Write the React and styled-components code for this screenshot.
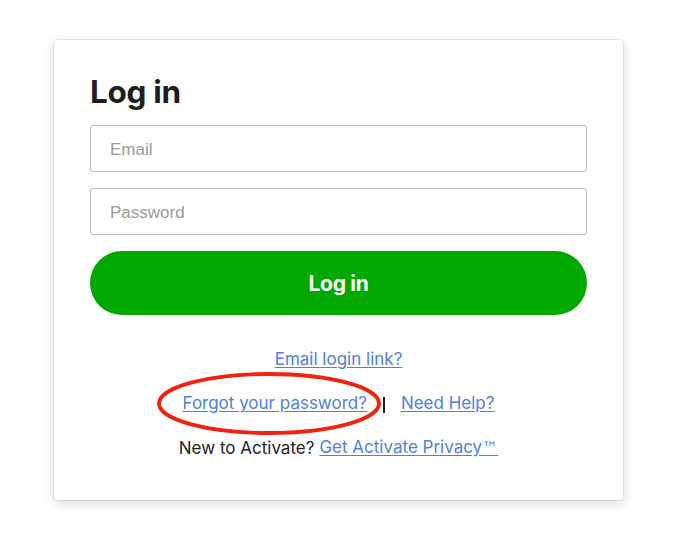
import React from "react";
import styled, { createGlobalStyle } from "styled-components";

const GlobalStyle = createGlobalStyle`
  html, body { margin: 0; padding: 0; background: #ffffff; }
  body { font-family: Inter, "Liberation Sans", Arial, sans-serif; color: #222; }
  * { box-sizing: border-box; }
`;

const Page = styled.div`
  padding: 40px 0 0 54px;
  width: 697px;
  height: 557px;
`;

const Card = styled.div`
  width: 569px;
  height: 460px;
  background: #fff;
  border-radius: 4px;
  box-shadow: 0 0 0 1px rgba(0, 0, 0, 0.07), 0 3px 12px rgba(0, 0, 0, 0.16);
  padding: 34px 36px 0 36px;
  display: flex;
  flex-direction: column;
`;

const Title = styled.h1`
  margin: 0;
  font-family: Inter, "Liberation Sans", sans-serif;
  font-weight: 700;
  font-size: 31.5px;
  line-height: 36px;
  letter-spacing: -0.3px;
  color: #1e1e1e;
`;

const Form = styled.form`
  margin-top: 15px;
  display: flex;
  flex-direction: column;
  gap: 16px;
`;

const Field = styled.input`
  width: 100%;
  height: 47px;
  border: 1px solid #b9b9b9;
  border-radius: 3px;
  padding: 2px 19px 0;
  font-family: "Liberation Sans", Arial, sans-serif;
  font-size: 17px;
  color: #222;
  outline: none;
  &::placeholder { color: #9a9a9a; }
`;

const Submit = styled.button`
  height: 64px;
  border: none;
  border-radius: 32px;
  background: #00a800;
  color: #fff;
  font-family: Inter, "Liberation Sans", sans-serif;
  font-weight: 700;
  font-size: 21px;
  letter-spacing: -0.3px;
  cursor: pointer;
`;

const Links = styled.div`
  margin-top: 34px;
  display: flex;
  flex-direction: column;
  align-items: center;
  gap: 24px;
  font-family: Inter, "Liberation Sans", sans-serif;
  font-size: 17px;
  line-height: 20px;
`;

const Row = styled.div`
  display: flex;
  align-items: center;
  gap: ${(p) => p.$gap || 0}px;
  color: #222;
`;

const Link = styled.a`
  color: #4f7fdf;
  text-decoration: underline;
  text-underline-offset: 2px;
  cursor: pointer;
`;

const Trademark = styled.span`
  font-family: "DejaVu Sans", sans-serif;
  font-size: 16px;
`;

const Circled = styled.span`
  position: relative;
  display: inline-flex;
`;

const Ring = styled.svg`
  position: absolute;
  left: -26px;
  top: -21px;
  width: 224px;
  height: 63px;
  pointer-events: none;
  overflow: visible;
`;

const Divider = styled.span`
  width: 2px;
  height: 16px;
  background: #222;
  margin-top: 4px;
`;

export default function App() {
  return (
    <>
      <GlobalStyle />
      <Page>
        <Card>
          <Title>Log in</Title>
          <Form onSubmit={(e) => e.preventDefault()}>
            <Field type="email" placeholder="Email" />
            <Field type="password" placeholder="Password" />
            <Submit type="submit">Log in</Submit>
          </Form>
          <Links>
            <Row>
              <Link>Email login link?</Link>
            </Row>
            <Row $gap={16}>
              <Circled>
                <Link>Forgot your password?</Link>
                <Ring viewBox="0 0 224 63">
                  <ellipse
                    cx="112"
                    cy="31.5"
                    rx="110"
                    ry="29.5"
                    fill="none"
                    stroke="#f2230e"
                    strokeWidth="3.8"
                  />
                </Ring>
              </Circled>
              <Divider />
              <Link>Need Help?</Link>
            </Row>
            <Row $gap={5}>
              <span>New to Activate?</span>
              <Link>
                Get Activate Privacy<Trademark>™</Trademark>
              </Link>
            </Row>
          </Links>
        </Card>
      </Page>
    </>
  );
}
